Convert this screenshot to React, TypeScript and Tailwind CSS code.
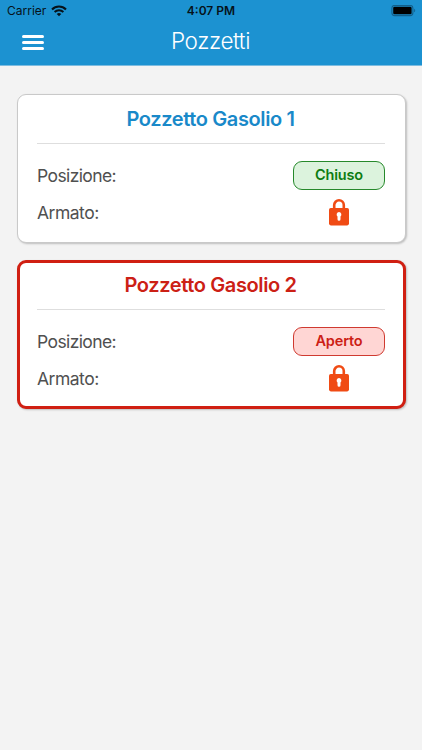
const LockIcon = () => (
  <svg width="20" height="27" viewBox="0 0 20 27" aria-hidden="true">
    <path d="M5.2 11V6.1a4.8 4.8 0 0 1 9.6 0V11" fill="none" stroke="#f04b14" strokeWidth="2.6" />
    <rect x="0" y="9" width="20" height="17.4" rx="1.8" fill="#f04b14" />
    <path d="M10 13a2.5 2.5 0 0 1 1.5 4.4v2.9a1.5 1.5 0 0 1-3 0v-2.9A2.5 2.5 0 0 1 10 13z" fill="#fff" />
  </svg>
);

const WifiIcon = () => (
  <svg width="16" height="12" viewBox="0 0 16 12" fill="none" stroke="#06121a" aria-hidden="true">
    <path d="M1 4.4a10 10 0 0 1 14 0" strokeWidth="2.1" />
    <path d="M3.6 7a6.3 6.3 0 0 1 8.8 0" strokeWidth="1.9" />
    <path d="M8 11.3 5.7 9a3.3 3.3 0 0 1 4.6 0z" fill="#06121a" stroke="none" />
  </svg>
);

const BatteryIcon = () => (
  <svg width="26" height="12" viewBox="0 0 26 12" aria-hidden="true">
    <rect x="0.9" y="0.4" width="21" height="10.2" rx="2.8" fill="none" stroke="#12608c" strokeWidth="1.1" />
    <rect x="2.2" y="1.7" width="18.4" height="7.6" rx="1.4" fill="#000" />
    <path d="M23.2 3.7c1.3.4 1.3 3.2 0 3.6z" fill="#12608c" />
  </svg>
);

interface ManholeProps {
  name: string;
  open?: boolean;
}

function ManholeCard({ name, open = false }: ManholeProps) {
  return (
    <section
      className={`h-[149px] rounded-[9px] bg-white shadow-[1px_1px_2px_rgba(0,0,0,0.22)] ${
        open ? "border-[3px] border-[#d01f12] pr-[18px] pl-[17px]" : "border border-[#c9c9c9] pr-5 pl-[19px]"
      }`}
    >
      <h2
        className={`border-b border-[#dedede] pr-px text-center text-[20px] leading-[31px] font-semibold tracking-[-0.38px] ${
          open ? "h-[47px] pt-[7px] text-[#cc2015]" : "h-[49px] pt-[9px] text-[#1989c9]"
        }`}
      >
        {name}
      </h2>
      <div className="mt-[17px] flex h-[29px] items-center justify-between text-[17.5px] text-[#505050]">
        <span className="pt-px tracking-[-0.6px]">Posizione:</span>
        <span
          className={`flex h-[29px] w-[92px] items-center justify-center rounded-[9px] border pb-[2px] text-[14.5px] font-semibold tracking-[-0.15px] ${
            open ? "border-[#cf3a30] bg-[#ffd6d4] text-[#cc2015]" : "border-[#26892b] bg-[#dcf3dd] text-[#0e7c12]"
          }`}
        >
          {open ? "Aperto" : "Chiuso"}
        </span>
      </div>
      <div className="mt-[9px] flex h-[27px] items-center justify-between text-[17.5px] text-[#505050]">
        <span className="pt-[2px] tracking-[-0.5px]">Armato:</span>
        <span className="flex w-[92px] justify-center">
          <LockIcon />
        </span>
      </div>
    </section>
  );
}

export default function App() {
  return (
    <div className="h-[750px] w-[422px] overflow-hidden bg-[#f3f3f3] font-['Inter',sans-serif]">
      <header className="h-[66px] border-b border-[#7dbce0] bg-[#1c92d1]">
        <div className="grid h-[22px] grid-cols-3 items-center text-[12px] text-[#06121a]">
          <div className="flex items-center gap-[5px] pl-[7px]">
            <span>Carrier</span>
            <WifiIcon />
          </div>
          <span className="text-center font-semibold">4:07 PM</span>
          <div className="flex justify-end pr-[5px]">
            <BatteryIcon />
          </div>
        </div>
        <div className="grid h-[41px] grid-cols-[1fr_auto_1fr] items-center">
          <button aria-label="Menu" className="ml-[22px] flex w-[22px] flex-col gap-[3px]">
            <span className="h-[3px] rounded-full bg-white" />
            <span className="h-[3px] rounded-full bg-white" />
            <span className="h-[3px] rounded-full bg-white" />
          </button>
          <h1 className="pr-px pb-1 text-[22.5px] leading-[37px] font-light tracking-[-0.4px] text-white">Pozzetti</h1>
        </div>
      </header>
      <main className="flex flex-col gap-[17px] pt-7 pr-4 pl-[17px]">
        <ManholeCard name="Pozzetto Gasolio 1" />
        <ManholeCard name="Pozzetto Gasolio 2" open />
      </main>
    </div>
  );
}
